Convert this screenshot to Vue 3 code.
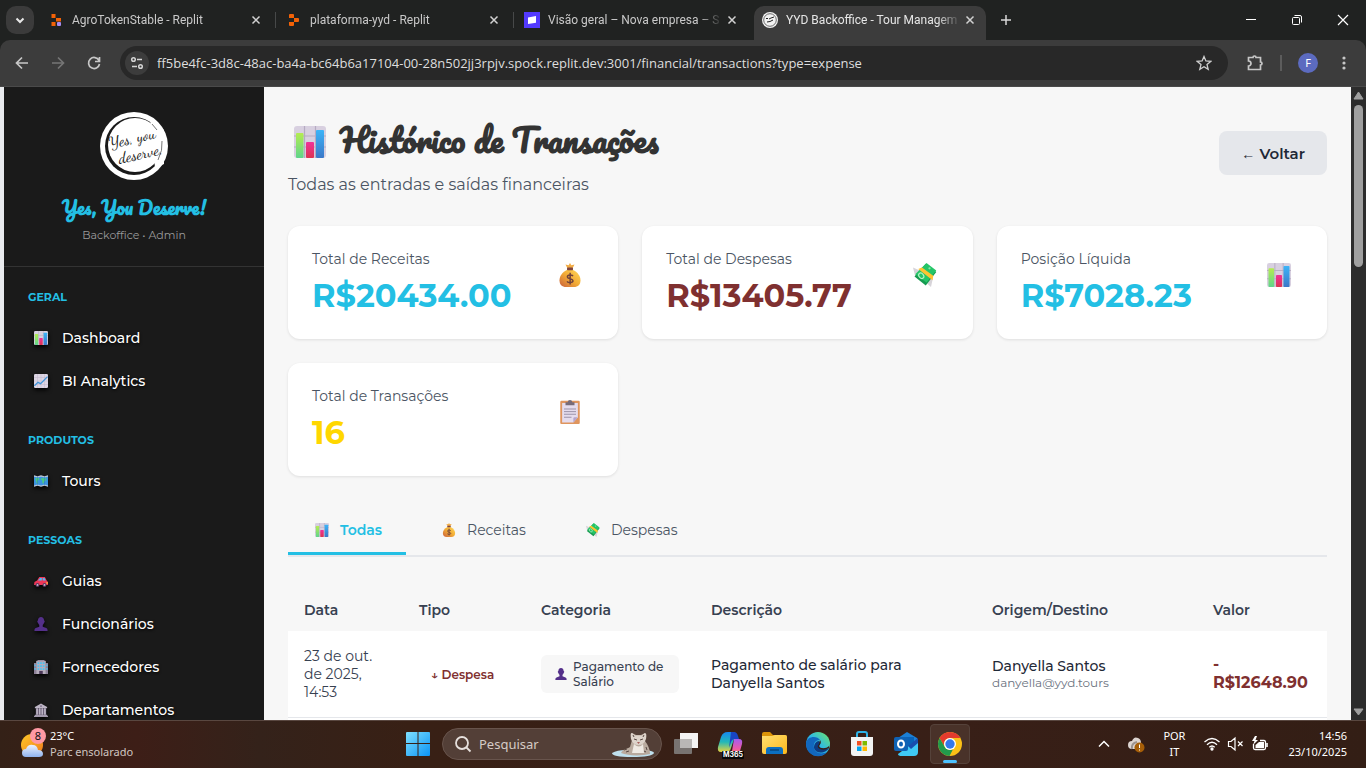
<script setup>
const tabs = [
  { title: 'AgroTokenStable - Replit', icon: 'fav-agro' },
  { title: 'plataforma-yyd - Replit', icon: 'fav-replit' },
  { title: 'Visão geral – Nova empresa – S', icon: 'fav-stripe' },
  { title: 'YYD Backoffice - Tour Managem', icon: 'fav-yyd', active: true },
]
const url = 'ff5be4fc-3d8c-48ac-ba4a-bc64b6a17104-00-28n502jj3rpjv.spock.replit.dev:3001/financial/transactions?type=expense'
const sections = [
  { title: 'GERAL', items: [{ icon: 'chart', label: 'Dashboard' }, { icon: 'trend', label: 'BI Analytics' }] },
  { title: 'PRODUTOS', items: [{ icon: 'map', label: 'Tours' }] },
  {
    title: 'PESSOAS',
    items: [
      { icon: 'car', label: 'Guias' },
      { icon: 'person', label: 'Funcionários' },
      { icon: 'office', label: 'Fornecedores' },
      { icon: 'bank', label: 'Departamentos' },
    ],
  },
]
const cards = [
  { label: 'Total de Receitas', value: 'R$20434.00', tone: 'blue', icon: 'bag' },
  { label: 'Total de Despesas', value: 'R$13405.77', tone: 'red', icon: 'cash' },
  { label: 'Posição Líquida', value: 'R$7028.23', tone: 'blue', icon: 'chart' },
  { label: 'Total de Transações', value: '16', tone: 'gold', icon: 'clip' },
]
const filters = [
  { label: 'Todas', icon: 'chart', active: true },
  { label: 'Receitas', icon: 'bag' },
  { label: 'Despesas', icon: 'cash' },
]
const columns = ['Data', 'Tipo', 'Categoria', 'Descrição', 'Origem/Destino', 'Valor']
const apps = [
  { id: 'taskview', name: 'Visão de tarefas' },
  { id: 'm365', name: 'Microsoft 365 Copilot', tag: 'M365' },
  { id: 'folder', name: 'Explorador' },
  { id: 'edge', name: 'Edge' },
  { id: 'store', name: 'Store' },
  { id: 'outlook', name: 'Outlook' },
  { id: 'chrome', name: 'Chrome', active: true },
]
</script>

<template>
  <svg class="sprite" aria-hidden="true">
    <defs>
      <linearGradient id="gGreen" x1="0" y1="0" x2="0" y2="1"><stop offset="0" stop-color="#b4ec51" /><stop offset="1" stop-color="#5fd48c" /></linearGradient>
      <linearGradient id="gPink" x1="0" y1="0" x2="0" y2="1"><stop offset="0" stop-color="#f0309a" /><stop offset="1" stop-color="#dc3450" /></linearGradient>
      <linearGradient id="gBlue" x1="0" y1="0" x2="0" y2="1"><stop offset="0" stop-color="#3cb4f8" /><stop offset="1" stop-color="#3b78c8" /></linearGradient>
      <linearGradient id="gBag" x1="1" y1="0" x2="0" y2="1"><stop offset="0" stop-color="#ffd95a" /><stop offset=".5" stop-color="#f2ab35" /><stop offset="1" stop-color="#c9603c" /></linearGradient>
      <linearGradient id="gWin" x1="0" y1="0" x2="1" y2="1"><stop offset="0" stop-color="#7fe0ff" /><stop offset="1" stop-color="#0a93f5" /></linearGradient>
      <linearGradient id="gEdge" x1="0" y1="1" x2="1" y2="0"><stop offset="0" stop-color="#0a63c9" /><stop offset=".5" stop-color="#2db8e6" /><stop offset="1" stop-color="#70e866" /></linearGradient>
      <linearGradient id="gSun" x1="0" y1="0" x2="1" y2="1"><stop offset="0" stop-color="#ffc928" /><stop offset="1" stop-color="#f07a1c" /></linearGradient>
      <linearGradient id="gCloud" x1="0" y1="0" x2="0" y2="1"><stop offset="0" stop-color="#eef3fd" /><stop offset="1" stop-color="#8fb2ee" /></linearGradient>
      <linearGradient id="gFolder" x1="0" y1="0" x2="1" y2="1"><stop offset="0" stop-color="#ffdf72" /><stop offset="1" stop-color="#fcb81c" /></linearGradient>
      <linearGradient id="gCopA" x1="0" y1="0" x2="0" y2="1"><stop offset="0" stop-color="#1688f0" /><stop offset=".5" stop-color="#22b8b8" /><stop offset="1" stop-color="#e8d33c" /></linearGradient>
      <linearGradient id="gCopB" x1="0" y1="0" x2="0" y2="1"><stop offset="0" stop-color="#a55cf0" /><stop offset=".6" stop-color="#ec5aa8" /><stop offset="1" stop-color="#f88a4c" /></linearGradient>
    </defs>
    <symbol id="chart" viewBox="0 0 32 32">
      <rect width="32" height="32" rx="3" fill="#d8d0e0" />
      <path d="M10.500 0v32M21.500 0v32M0 10h32M0 21h32" stroke="#b5abc2" stroke-width="1.200" />
      <rect x="2" y="7" width="7.500" height="25" rx="1" fill="url(#gGreen)" />
      <rect x="12" y="16" width="8" height="16" rx="1" fill="url(#gPink)" />
      <rect x="22" y="4" width="8" height="28" rx="1" fill="url(#gBlue)" />
    </symbol>
    <symbol id="trend" viewBox="0 0 32 32">
      <rect width="32" height="32" rx="3" fill="#ddd5e4" />
      <path d="M8 0v32M16 0v32M24 0v32M0 8h32M0 16h32M0 24h32" stroke="#bdb3c9" />
      <path d="M1 27l8-8 6 3L31 6" fill="none" stroke="#3f94d8" stroke-width="3" />
    </symbol>
    <symbol id="map" viewBox="0 0 32 32">
      <path d="M0 4l8 2 8-2 8 2 8-2v24l-8-2-8 2-8-2-8 2z" fill="#3b94e0" />
      <path d="M0 3l8 2 8-2 8 2 8-2v3l-8 2-8-2-8 2-8-2zM0 26l8-2 8 2 8-2 8 2v3l-8-2-8 2-8-2-8 2z" fill="#b9c3d2" />
      <path d="M3 9l9 0-1 5-4 2 3 4-2 3-3-5zM17 9l11 1-2 6-3 1-1 5-3-2v-5l-3-2z" fill="#4ccb82" />
      <path d="M8 5v21M24 5v21" stroke="#2b70b9" />
    </symbol>
    <symbol id="car" viewBox="0 0 32 32">
      <path d="M1 18l6-3 5-8h13l4 8 3 3v7H0z" fill="#ee3658" />
      <path d="M9 15l5-6h4v6zM20 9h4l3 6h-7z" fill="#54b9ef" />
      <circle cx="8" cy="25" r="4.500" fill="#5b3962" /><circle cx="24" cy="25" r="4.500" fill="#5b3962" />
      <circle cx="8" cy="25" r="2" fill="#cbbfd0" /><circle cx="24" cy="25" r="2" fill="#cbbfd0" />
      <path d="M28 19h4v3h-4z" fill="#f8b33b" />
    </symbol>
    <symbol id="person" viewBox="0 0 32 32">
      <path d="M9 8c0-5 3-8 7-8s7 3 7 8c2 0 2 4 0 5-1 3-2 4-3 5v4l8 3c3 1 3 4 3 7H1c0-3 0-6 3-7l8-3v-4c-1-1-2-2-3-5-2-1-2-5 0-5z" fill="#54308a" />
    </symbol>
    <symbol id="office" viewBox="0 0 32 32">
      <path d="M0 7h6v25H0zM26 7h6v25h-6z" fill="#8c8097" /><path d="M5 2h22v30H5z" fill="#b5acbc" /><path d="M8 0h16v3H8z" fill="#988ea3" />
      <path d="M8 5h4v4H8zM14 5h4v4h-4zM20 5h4v4h-4zM8 12h4v4H8zM14 12h4v4h-4zM20 12h4v4h-4zM8 19h4v4H8zM20 19h4v4h-4zM14 19h4v3h-4zM1 10h3v4H1zM28 10h3v4h-3zM1 18h3v4H1zM28 18h3v4h-3z" fill="#4ac2f2" />
      <path d="M12 25h8v7h-8z" fill="#4b3858" />
    </symbol>
    <symbol id="bank" viewBox="0 0 32 32">
      <path d="M16 1l14 8v3H2V9z" fill="#bdb5c5" /><circle cx="16" cy="7" r="2" fill="#726581" />
      <path d="M4 12h24v15H4z" fill="#5e506b" /><path d="M5 12h4v15H5zM11 12h4v15h-4zM17 12h4v15h-4zM23 12h4v15h-4z" fill="#bcb4c4" />
      <path d="M2 27h28v2H2zM0 29h32v3H0z" fill="#a49aae" />
    </symbol>
    <symbol id="bag" viewBox="0 0 32 32">
      <path d="M16 0l1.800 3 4.200-1-2.500 5h-7L10 2l4.200 1z" fill="#f2ac45" />
      <path d="M12.500 9h7c7 3 10.500 9 10.500 14 0 6-3 9-9 9H11c-6 0-9-3-9-9 0-5 3.500-11 10.500-14z" fill="url(#gBag)" />
      <rect x="12" y="6" width="8" height="3.500" rx="1" fill="#80453e" />
      <path d="M20 17.500c-1.500-2-7.500-2-7.500 1s7.500 2.200 7.500 5.200-6.500 3-8 .8M16.200 13v15.500" fill="none" stroke="#70433b" stroke-width="2" />
    </symbol>
    <symbol id="cash" viewBox="0 0 32 32">
      <path d="M0 6l9 4-6 8zM27 18l-3 14-8-7z" fill="#d7d4d9" />
      <path d="M17 1l14 11-14 18L2 18z" fill="#169b51" /><path d="M18 0l13 10-13 16L3 15z" fill="#25c568" />
      <ellipse cx="11" cy="17" rx="3" ry="4" transform="rotate(-40 11 17)" fill="none" stroke="#b7f2c5" stroke-width="1.500" />
      <path d="M7 8l5-2 15 11-1 6z" fill="#ffc332" /><circle cx="22" cy="7" r="1.500" fill="#8ae6a7" />
    </symbol>
    <symbol id="clip" viewBox="0 0 32 32">
      <rect x="3" y="1" width="26" height="31" rx="1.500" fill="#df955e" /><path d="M5.500 4h21v19l-6 7h-15z" fill="#e5dcee" />
      <path d="M26.500 23l-6 7v-5.500a1.500 1.500 0 0 1 1.500-1.500z" fill="#b5a4cc" />
      <path d="M10 7V3h3c0-4 6-4 6 0h3v4z" fill="#776b79" />
      <path d="M8 12h16M8 15.500h16M8 19h16M8 23h10" stroke="#9990a7" stroke-width="1.300" />
    </symbol>
    <symbol id="fav-agro" viewBox="0 0 16 16">
      <path d="M3.500 2h4v4h-4zM8 6h5v3.500H8zM3.500 10h4v4h-4z" fill="#f26207" /><rect x="9" y="10" width="4" height="4" rx="1" fill="#a58cf2" />
    </symbol>
    <symbol id="fav-replit" viewBox="0 0 16 16">
      <path d="M3 3q0-1 1-1h3q1 0 1 1v3H3zM8 6h4q1 0 1 1v2q0 1-1 1H8zM3 10h5v3q0 1-1 1H4q-1 0-1-1z" fill="#f26207" />
    </symbol>
    <symbol id="fav-stripe" viewBox="0 0 16 16"><path d="M0 0h16v16H0z" fill="#533afd" /><path d="M4 5.500L12 4v6.800L4 12z" fill="#fff" /></symbol>
    <symbol id="fav-yyd" viewBox="0 0 16 16">
      <circle cx="8" cy="8" r="8" fill="#f2f2f2" /><circle cx="8" cy="8" r="6.300" fill="none" stroke="#333" stroke-width=".7" />
      <path d="M4 6q1 2 2 0M7 7l2-1 3-1M5 10q3 0 6-2" fill="none" stroke="#222" />
    </symbol>
    <symbol id="x" viewBox="0 0 16 16"><path d="M4.500 4.500l7 7M11.500 4.500l-7 7" stroke="currentColor" stroke-width="1.500" /></symbol>
    <symbol id="taskview" viewBox="0 0 32 32">
      <path d="M10 5h18v15H10z" fill="#f4f4f4" /><rect x="4" y="11" width="18" height="15" rx="1" fill="#787371" /><path d="M10 11h12v9H10z" fill="#b9b7b6" />
    </symbol>
    <symbol id="m365" viewBox="0 0 32 32">
      <path d="M10 5q1-1 4-1h5q3 0 2 4l-4 12q-1 4-5 4H7q-4 0-3-5l3-10q1-3 3-4z" fill="url(#gCopA)" />
      <path d="M17 4h3q3 0 4 4l1 3h-4q-3 0-4 3l-2 6z" fill="#1845c4" />
      <path d="M20 11h5q4 0 3 5l-2 7q-1 4-5 4h-6q2-1 3-4z" fill="url(#gCopB)" />
    </symbol>
    <symbol id="folder" viewBox="0 0 32 32">
      <path d="M4 6q0-2 2-2h6l3 3h12q2 0 2 2v3H4z" fill="#dc9409" /><path d="M4 8h10l3-1h10q2 0 2 2v15q0 2-2 2H6q-2 0-2-2z" fill="url(#gFolder)" />
      <path d="M8 26v-4q0-3 3-3h11q3 0 3 3v4z" fill="#0c6fc0" /><path d="M12 22h9" stroke="#06467f" stroke-width="1.500" />
    </symbol>
    <symbol id="edge" viewBox="0 0 32 32">
      <circle cx="16" cy="16" r="12" fill="url(#gEdge)" />
      <path d="M4 15c1-7 11-8 14-3-5 0-7 4-6 8 1 5 7 7 13 4-5 6-13 5-17 1q-4-4-4-10z" fill="#1267be" />
      <path d="M12 20c0-4 2-7 5-7 2 2 1 4 0 5 0 2 3 4 10 2-2 5-13 7-15 0z" fill="#0d3c83" />
      <path d="M18 12c2 3 0 4-1 6 1 3 7 3 10 0v2q-5 3-9 1-4-2-1-5z" fill="#381f17" />
    </symbol>
    <symbol id="store" viewBox="0 0 32 32">
      <path d="M11 9V6q0-2 2-2h6q2 0 2 2v3" fill="none" stroke="#2eb3e8" stroke-width="2" />
      <path d="M5 9h22v16q0 3-3 3H8q-3 0-3-3z" fill="#f3f3f3" />
      <path d="M11 13h4.500v4.500H11z" fill="#f25022" /><path d="M16.500 13H21v4.500h-4.500z" fill="#7fba00" /><path d="M11 18.500h4.500V23H11z" fill="#00a4ef" /><path d="M16.500 18.500H21V23h-4.500z" fill="#ffb900" />
    </symbol>
    <symbol id="outlook" viewBox="0 0 32 32">
      <path d="M8 10l9-6 10 6v13H8z" fill="#1b7fd6" /><path d="M11 9h13v12H11z" fill="#0962b8" />
      <path d="M8 26l20-15v13q0 4-4 4H12q-4 0-4-2z" fill="#3fc9f5" /><path d="M18 18l10-8v5l-7 6z" fill="#184eae" />
      <rect x="4" y="9" width="14" height="14" rx="2" fill="#0f62b5" /><ellipse cx="11" cy="16" rx="3" ry="3.500" fill="none" stroke="#fff" stroke-width="2" />
    </symbol>
    <symbol id="chrome" viewBox="0 0 32 32">
      <circle cx="16" cy="16" r="12" fill="#fbc116" />
      <path d="M5.600 10A12 12 0 0 1 26.400 10H16a6 6 0 0 0-5.500 8.500z" fill="#e33b2e" />
      <path d="M5.600 10l5.200 9a6 6 0 0 0 8.200 2.200L15.500 28A12 12 0 0 1 5.600 10z" fill="#229a4c" />
      <circle cx="16" cy="16" r="6" fill="#fff" /><circle cx="16" cy="16" r="4.700" fill="#3478ea" />
    </symbol>
  </svg>

  <div class="screen">
    <header class="browser">
      <div class="strip">
        <button class="tab-search" aria-label="Pesquisar separadores">
          <svg width="16" height="16" viewBox="0 0 16 16"><path d="M4.500 6.500L8 10l3.500-3.500" fill="none" stroke="#e8e8e8" stroke-width="2" /></svg>
        </button>
        <div v-for="t in tabs" :key="t.title" class="tab" :class="{ active: t.active }">
          <svg class="fav"><use :href="'#' + t.icon" /></svg>
          <span class="tab-title">{{ t.title }}</span>
          <button class="tab-close" aria-label="Fechar"><svg width="16" height="16"><use href="#x" /></svg></button>
        </div>
        <button class="new-tab" aria-label="Novo separador">
          <svg width="16" height="16" viewBox="0 0 16 16"><path d="M8 3v10M3 8h10" stroke="#d8d8d8" stroke-width="1.500" /></svg>
        </button>
        <div class="window-buttons">
          <button aria-label="Minimizar"><svg width="12" height="12" viewBox="0 0 12 12"><path d="M1 5.500h10" stroke="#fff" /></svg></button>
          <button aria-label="Restaurar"><svg width="12" height="12" viewBox="0 0 12 12" fill="none" stroke="#fff"><rect x="1.500" y="3.500" width="7" height="7" rx="1" /><path d="M3.500 1.500H9q1.500 0 1.500 1.500v5.500" /></svg></button>
          <button aria-label="Fechar janela"><svg width="12" height="12" viewBox="0 0 12 12"><path d="M1 1l10 10M11 1L1 11" stroke="#fff" stroke-width="1.200" /></svg></button>
        </div>
      </div>
      <div class="toolbar">
        <button class="nav-btn" aria-label="Voltar"><svg width="16" height="16" viewBox="0 0 16 16"><path d="M14 8H3M8 2.500L2.500 8 8 13.500" fill="none" stroke="#c7c7c7" stroke-width="1.700" /></svg></button>
        <button class="nav-btn" aria-label="Avançar"><svg width="16" height="16" viewBox="0 0 16 16"><path d="M2 8h11M8 2.500L13.500 8 8 13.500" fill="none" stroke="#757575" stroke-width="1.700" /></svg></button>
        <button class="nav-btn" aria-label="Recarregar"><svg width="16" height="16" viewBox="0 0 16 16"><path d="M13 5.500A5.500 5.500 0 1 0 13.500 9M13.500 2v4.500H9" fill="none" stroke="#c7c7c7" stroke-width="1.700" /></svg></button>
        <div class="omnibox">
          <button class="site-info" aria-label="Informações do site">
            <svg width="16" height="16" viewBox="0 0 16 16" fill="none" stroke="#d5d5d5" stroke-width="1.500"><circle cx="4.500" cy="4.500" r="1.800" /><path d="M8 4.500h5M3 11.500h5" /><circle cx="11.500" cy="11.500" r="1.800" /></svg>
          </button>
          <input class="url" type="text" aria-label="Endereço" :value="url" />
          <button class="star" aria-label="Marcador"><svg width="16" height="16" viewBox="0 0 16 16"><path d="M8 1.500l1.900 4.500 4.800.4-3.700 3.200 1.200 4.800L8 11.800l-4.200 2.600L5 9.600 1.300 6.400 6.100 6z" fill="none" stroke="#d0d0d0" stroke-width="1.300" /></svg></button>
        </div>
        <button class="nav-btn" aria-label="Extensões"><svg width="18" height="18" viewBox="0 0 18 18"><path d="M2.500 3.500h4.500a1.500 1.500 0 0 1 3 0h4.500V8a1.500 1.500 0 0 1 0 3v4.500h-12V12a2.500 2.500 0 0 0 0-5z" fill="none" stroke="#c7c7c7" stroke-width="1.700" /></svg></button>
        <i class="bar-sep"></i>
        <button class="avatar" aria-label="Perfil">F</button>
        <button class="nav-btn dots" aria-label="Menu"><svg width="16" height="16" viewBox="0 0 16 16" fill="#c7c7c7"><circle cx="8" cy="3" r="1.600" /><circle cx="8" cy="8" r="1.600" /><circle cx="8" cy="13" r="1.600" /></svg></button>
      </div>
    </header>

    <div class="page">
      <aside class="sidebar">
        <div class="brand">
          <svg class="logo" viewBox="0 0 68 68">
            <circle cx="34" cy="34" r="34" fill="#fff" />
            <circle cx="34" cy="34" r="29" fill="#191919" />
            <circle cx="35" cy="33" r="27" fill="#fff" />
            <path d="M50 6l14 12v34l-9 4z" fill="#fff" />
            <path d="M52 12l5 6M62 29q1 9-4 19" fill="none" stroke="#777" />
            <text x="10" y="31" transform="rotate(-13 34 34)" class="logo-text">Yes, you</text>
            <text x="16" y="48" transform="rotate(-13 34 34)" class="logo-text">deserve.</text>
          </svg>
          <div class="brand-name">Yes, You Deserve!</div>
          <div class="brand-sub">Backoffice • Admin</div>
        </div>
        <nav class="menu">
          <section v-for="s in sections" :key="s.title">
            <h2>{{ s.title }}</h2>
            <a v-for="i in s.items" :key="i.label" href="#"><svg><use :href="'#' + i.icon" /></svg>{{ i.label }}</a>
          </section>
        </nav>
      </aside>

      <main class="main">
        <div class="head">
          <div>
            <h1><svg><use href="#chart" /></svg>Histórico de Transações</h1>
            <p>Todas as entradas e saídas financeiras</p>
          </div>
          <button class="back"><span>←</span> Voltar</button>
        </div>
        <div class="cards">
          <article v-for="c in cards" :key="c.label" class="card">
            <div>
              <div class="card-label">{{ c.label }}</div>
              <div class="card-value" :class="c.tone">{{ c.value }}</div>
            </div>
            <span class="card-icon"><svg><use :href="'#' + c.icon" /></svg></span>
          </article>
        </div>
        <div class="filters" role="tablist">
          <button v-for="f in filters" :key="f.label" role="tab" :class="{ on: f.active }"><span><svg><use :href="'#' + f.icon" /></svg></span>{{ f.label }}</button>
        </div>
        <div class="table-wrap">
          <table>
            <colgroup><col class="c-date" /><col class="c-type" /><col class="c-cat" /><col class="c-desc" /><col class="c-from" /><col class="c-val" /></colgroup>
            <thead><tr><th v-for="c in columns" :key="c" scope="col">{{ c }}</th></tr></thead>
            <tbody>
              <tr>
                <td class="date">23 de out.<br />de 2025,<br />14:53</td>
                <td><span class="kind">↓ Despesa</span></td>
                <td><span class="cat"><svg><use href="#person" /></svg><span>Pagamento de Salário</span></span></td>
                <td class="desc">Pagamento de salário para Danyella Santos</td>
                <td class="from">Danyella Santos<small>danyella@yyd.tours</small></td>
                <td class="value">-<br />R$12648.90</td>
              </tr>
            </tbody>
          </table>
        </div>
      </main>

      <div class="scrollbar" aria-hidden="true">
        <svg width="15" height="18" viewBox="0 0 15 18"><path d="M7.500 5L12 12H3z" fill="#9f9f9f" stroke="#9f9f9f" stroke-linejoin="round" /></svg>
        <i class="thumb"></i>
        <svg width="15" height="18" viewBox="0 0 15 18"><path d="M7.500 13L12 7H3z" fill="#9f9f9f" stroke="#9f9f9f" stroke-linejoin="round" /></svg>
      </div>
    </div>

    <footer class="taskbar">
      <button class="weather">
        <svg width="28" height="32" viewBox="0 0 28 32"><circle cx="12" cy="17" r="11" fill="url(#gSun)" /><path d="M6 29a4 4 0 0 1 0-8q2-5 7-4 4 0 5 5 5 0 5 4 0 3-4 3z" fill="url(#gCloud)" /><circle cx="18" cy="8" r="8" fill="#ff99a4" /><text x="18" y="12" text-anchor="middle" class="badge-text">8</text></svg>
        <span>23°C<small>Parc ensolarado</small></span>
      </button>
      <div class="apps">
        <button class="app" aria-label="Iniciar"><svg width="24" height="24" viewBox="0 0 24 24" fill="url(#gWin)"><path d="M1 0h10.500v11H0V1q0-1 1-1zM12.500 0H23q1 0 1 1v10H12.500zM0 12h11.500v12H1q-1 0-1-1zM12.500 12H24v11q0 1-1 1H12.500z" /></svg></button>
        <label class="search">
          <svg width="18" height="18" viewBox="0 0 18 18" fill="none" stroke="#e6e0dd" stroke-width="1.800"><circle cx="8" cy="8" r="6" /><path d="M12.500 12.500l4 4" /></svg>
          <input type="text" placeholder="Pesquisar" aria-label="Pesquisar" />
          <svg width="44" height="28" viewBox="0 0 44 28">
            <path d="M1 23q5-3 14-3h19q9 1 9 3-2 4-22 4T1 23z" fill="#bfe0ee" />
            <path d="M10 23c2-4 6-4 9-6l2-7V3l4 2h5l4-2v8c3 4 5 8 5 13-8 2-22 2-29-1z" fill="#b9aa9e" />
            <path d="M20 9q-1-7 1-6l3 2.500h7L34 3q2 0 1 6-2 6-7.500 6T20 9z" fill="#ddd3ca" />
            <path d="M23 14q5 5 9 0l1 9H21z" fill="#efe9e2" />
            <path d="M23 9l3 1M32 9l-3 1M13 20l3-1M15 22l3-1M35 17l1 3M33 21l2 1M22 5l1 2M33 5l-1 2" stroke="#594a44" /><path d="M26 12h3l-1.500 2z" fill="#a85f5c" />
          </svg>
        </label>
        <button v-for="a in apps" :key="a.id" class="app" :class="{ running: a.active }" :aria-label="a.name">
          <svg width="32" height="32"><use :href="'#' + a.id" /></svg>
          <span v-if="a.tag" class="tag">{{ a.tag }}</span>
        </button>
      </div>
      <div class="tray">
        <button aria-label="Ícones ocultos"><svg width="14" height="14" viewBox="0 0 14 14"><path d="M2 9.500l5-5 5 5" fill="none" stroke="#fff" stroke-width="1.500" /></svg></button>
        <button class="cloud" aria-label="OneDrive"><svg width="18" height="18" viewBox="0 0 18 18"><path d="M5 14q-4 0-4-4t4-4q2-5 6-3 3 1 3 5v6z" fill="#dcd4d0" /><path d="M5 14q-1-6 5-7" fill="none" stroke="#9b9390" stroke-width="2" /><circle cx="12.500" cy="12.500" r="5" fill="#a65e08" /><path d="M12.500 9.500v3.500M12.500 14.500v1" stroke="#fff" /></svg></button>
        <button class="lang">POR<br />IT</button>
        <button class="status" aria-label="Rede, volume e bateria">
          <svg width="18" height="16" viewBox="0 0 18 16" fill="none" stroke="#fff" stroke-width="1.300"><path d="M1.500 6q7.500-7 15 0M4 8.700q5-4.800 10 0M6.300 11.300q2.700-2.600 5.400 0" /><circle cx="9" cy="13" r="1" fill="#fff" /></svg>
          <svg width="18" height="16" viewBox="0 0 18 16" fill="none" stroke="#fff" stroke-width="1.200"><path d="M1.500 5.500H4l4-3.500v12l-4-3.500H1.500zM11 5.500l4.500 4.500M15.500 5.500L11 10" /></svg>
          <svg width="18" height="16" viewBox="0 0 18 16"><path d="M2.500 8v4q0 1.500 1.500 1.500h9q1.500 0 1.500-1.500V6q0-1.500-1.500-1.500H9" fill="none" stroke="#fff" stroke-width="1.300" /><path d="M4.500 9L8 6h5v6H4.500z" fill="#fff" /><path d="M16 7v4" stroke="#fff" stroke-width="1.600" /><path d="M4 0L1 5h2.500L2 9l5-5H4.500L6 0z" fill="#fff" /></svg>
        </button>
        <button class="clock">14:56<br />23/10/2025</button>
      </div>
    </footer>
  </div>
</template>

<style>
body { margin: 0; overflow: hidden; }
</style>

<style scoped>
* { box-sizing: border-box; }
button { border: 0; padding: 0; background: none; font: inherit; color: inherit; }
svg { display: block; flex-shrink: 0; }
.sprite { position: absolute; width: 0; height: 0; }
.screen { display: flex; flex-direction: column; height: 100vh; font-family: "Segoe UI", "Noto Sans", sans-serif; }

.browser { color: #d5d5d5; background: #202221; }
.strip { display: flex; height: 40px; padding-left: 6px; align-items: stretch; }
.tab-search { width: 28px; height: 28px; margin: 6px 4px 0 0; border-radius: 10px; background: #3b3b3b; display: grid; place-items: center; }
.tab { position: relative; flex: 0 1 238px; min-width: 0; display: flex; align-items: center; padding: 0 12px 0 10px; font-family: "Segoe UI", Roboto, sans-serif; font-size: 12px; color: #c9c9c9; z-index: 0; }
.tab:not(.active)::after { content: ""; position: absolute; right: 0; top: 12px; width: 1px; height: 16px; background: #474949; }
.tab:nth-child(4)::after { display: none; }
.tab.active { color: #e6e6e6; }
.tab.active::before { content: ""; position: absolute; z-index: -1; inset: 6px 4px 0 2px; border-radius: 10px 10px 0 0; background: #3c3c3c; }
.fav { width: 16px; height: 16px; margin-right: 8px; }
.tab-title { flex: 1; white-space: nowrap; overflow: hidden; margin-right: 1px; mask-image: linear-gradient(90deg, #000 calc(100% - 24px), transparent); }
.tab-close { color: #d2d2d2; }
.new-tab { width: 32px; display: grid; place-items: center; }
.window-buttons { margin-left: auto; display: flex; }
.window-buttons button { width: 46px; display: grid; place-items: center; }
.toolbar { display: flex; align-items: center; height: 47px; padding: 0 6px 0 4px; background: #3c3c3c; border-radius: 10px 10px 0 0; border-bottom: 1px solid #4a4a4a; }
.nav-btn { width: 36px; height: 36px; display: grid; place-items: center; }
.omnibox { flex: 1; display: flex; align-items: center; height: 34px; margin: 0 9px 0 8px; padding: 0 16px 0 5px; border-radius: 17px; background: #282828; }
.site-info { width: 24px; height: 24px; border-radius: 50%; background: #3c3c3c; display: grid; place-items: center; }
.url { flex: 1; min-width: 0; border: 0; padding: 0; margin-left: 8px; background: none; color: #dedede; font: 13px "Segoe UI", "Open Sans", sans-serif; outline: 0; }
.bar-sep { width: 2px; height: 16px; margin: 0 16px 0 7px; background: #5c5c5c; }
.avatar { width: 20px; height: 20px; border-radius: 50%; background: #5c6bc0; color: #fff; font-size: 11px; line-height: 20px; }
.dots { width: 32px; margin-left: 10px; }

.page { flex: 1; min-height: 0; display: flex; overflow: hidden; background: #f7f7f7; border-left: 4px solid #e9ebee; font-family: Montserrat, Inter, sans-serif; }
.sidebar { flex: 0 0 260px; background: #1a1a1a; color: #fff; overflow: hidden; }
.brand { height: 180px; padding-top: 25px; border-bottom: 1px solid #333; text-align: center; }
.logo { width: 68px; height: 68px; margin: 0 auto; }
.logo-text { font: 16px "Dancing Script", Pacifico, cursive; fill: #161616; }
.brand-name { margin-top: 12px; font: 700 18px/32px Pacifico, cursive; color: #23bfe4; }
.brand-sub { font-size: 11px; line-height: 22px; color: #9b9b9b; }
.menu { padding: 21px 24px; }
.menu section { margin-bottom: 29px; }
.menu h2 { margin: 0 0 10px; font-size: 11px; line-height: 18px; font-weight: 700; color: #23bfe4; }
.menu a { display: flex; align-items: center; gap: 14px; height: 43px; padding-left: 6px; color: #fff; text-decoration: none; font-size: 14px; font-weight: 500; text-shadow: 0 1px 3px #000; }
.menu a svg { width: 14px; height: 14px; filter: drop-shadow(0 2px 2px #000); }

.main { flex: 1; min-width: 0; display: flex; flex-direction: column; padding: 24px 24px 0; color: #1f2937; }
.head { display: flex; justify-content: space-between; align-items: center; margin-bottom: 31px; }
h1 { margin: 0 0 8px; padding-left: 6px; font: 700 32px/56px Pacifico, cursive; color: #333; white-space: nowrap; }
h1 svg { display: inline-block; vertical-align: -5px; width: 32px; height: 32px; margin-right: 14px; }
.head p { margin: 0; font-size: 16px; line-height: 20px; color: #4b5563; }
.back { height: 44px; padding: 0 22px; border-radius: 8px; background: #e5e7eb; font-size: 15px; font-weight: 600; }
.back span { font: 14px "Liberation Sans", sans-serif; }
.cards { display: grid; grid-template-columns: repeat(3, 1fr); gap: 24px; margin-bottom: 32px; }
.card { display: flex; justify-content: space-between; padding: 24px; border-radius: 12px; background: #fff; box-shadow: 0 1px 3px #0000001a; }
.card-label { font-size: 14px; line-height: 18px; color: #4b5563; margin-bottom: 8px; }
.card-value { font-size: 32px; line-height: 39px; font-weight: 700; }
.blue { color: #23bfe4; }
.red { color: #7f3030; }
.gold { color: #ffd700; }
.card-icon { width: 48px; height: 50px; display: grid; place-items: center; }
.card-icon svg { width: 24px; height: 24px; }
.filters { display: flex; gap: 9px; border-bottom: 2px solid #e5e7eb; margin-bottom: 32px; }
.filters button { display: flex; align-items: center; gap: 8px; height: 47px; padding: 0 24px; border-bottom: 3px solid transparent; font-size: 14px; color: #4b5563; }
.filters button span { width: 20px; display: grid; place-items: center; }
.filters svg { width: 14px; height: 14px; }
.filters .on { border-color: #23bfe4; color: #23bfe4; font-weight: 600; }
.table-wrap { flex: 1; background: #fff; }
table { width: 100%; table-layout: fixed; border-collapse: collapse; font-size: 14px; line-height: 18px; }
.c-date { width: 115px; }
.c-type { width: 122px; }
.c-cat { width: 170px; }
.c-desc { width: 281px; }
.c-from { width: 221px; }
.c-val { width: 130px; }
th { padding: 12px 16px; background: #f7f7f7; text-align: left; font-weight: 600; color: #374151; }
td { padding: 16px; vertical-align: middle; border-bottom: 1px solid #e5e7eb; }
.date { white-space: nowrap; color: #374151; }
.kind { padding-left: 12px; font-size: 12px; font-weight: 600; color: #7f3030; white-space: nowrap; }
.cat { display: flex; align-items: center; gap: 6px; min-height: 38px; padding: 4px 8px 4px 14px; border-radius: 6px; background: #f7f7f7; font-size: 12px; line-height: 15px; font-weight: 500; color: #374151; }
.cat svg { width: 12px; height: 12px; }
.desc, .from { font-weight: 500; }
.from small { display: block; font-size: 12px; line-height: 16px; font-weight: 400; color: #6b7280; }
.value { font-size: 16px; font-weight: 700; color: #7f3030; white-space: nowrap; }

.scrollbar { flex: 0 0 15px; display: flex; flex-direction: column; align-items: center; background: #2c2c2c; }
.thumb { width: 9px; height: 162px; margin-bottom: auto; border-radius: 5px; background: #9f9f9f; }

.taskbar { display: grid; grid-template-columns: 1fr auto 1fr; align-items: center; height: 48px; padding-bottom: 1px; border-top: 1px solid #594740; background: linear-gradient(90deg, #342117, #3d1e17 10%, #34221a 19%, #382015 30%, #381f17 70%, #331e15); color: #fff; font-size: 12px; line-height: 16px; }
.weather { justify-self: start; display: flex; align-items: center; gap: 2px; padding-left: 20px; text-align: left; font-size: 11px; }
.weather small { display: block; font-size: 11px; color: #cfc5c0; }
.badge-text { font: 11px "Noto Sans", sans-serif; fill: #111; }
.apps { display: flex; align-items: center; gap: 4px; padding-left: 2px; }
.app { position: relative; width: 40px; height: 40px; border-radius: 4px; display: grid; place-items: center; }
.tag { position: absolute; left: 12px; bottom: 5px; padding: 0 1px; border-radius: 1px; background: #080808; color: #fff; font: 700 7px/8px Inter, sans-serif; }
.running { background: #493229; border: 1px solid #55423a; }
.running::after { content: ""; position: absolute; left: 12px; right: 12px; bottom: 0; height: 3px; border-radius: 2px; background: #4cc2ff; }
.search { display: flex; align-items: center; width: 220px; height: 32px; padding: 0 6px 0 11px; border: 1px solid #68544c; border-radius: 16px; background: #533f37; }
.search input { flex: 1; min-width: 0; padding: 0; margin-left: 7px; border: 0; background: none; outline: 0; font: 13px "Segoe UI", "Noto Sans", sans-serif; }
.search input::placeholder { color: #d5cbc6; opacity: 1; }
.tray { justify-self: end; display: flex; align-items: center; padding-right: 19px; font-size: 11px; }
.cloud { margin-left: 16px; }
.lang { margin-left: 18px; text-align: center; }
.status { display: flex; gap: 6px; margin-left: 18px; }
.clock { margin-left: 19px; text-align: right; }
</style>
